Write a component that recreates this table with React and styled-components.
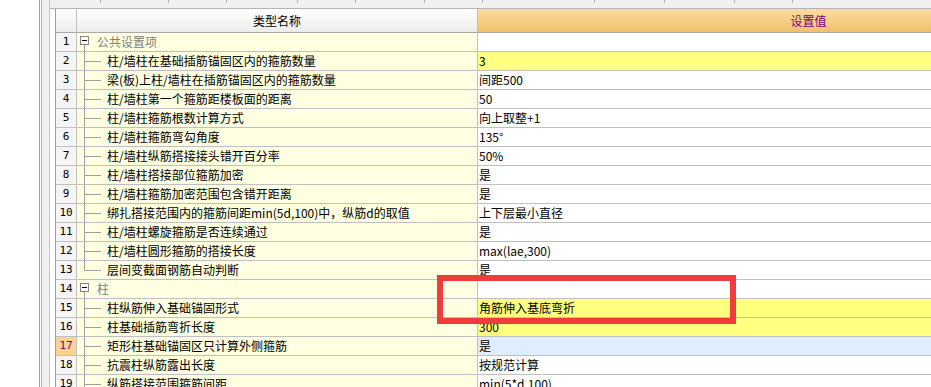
import React from 'react';
import styled, { createGlobalStyle } from 'styled-components';

const GlobalStyle = createGlobalStyle`
  html, body {
    margin: 0;
    padding: 0;
    background: #fff;
    overflow: hidden;
  }

  body {
    font-family: "Noto Sans CJK SC", "Noto Sans", sans-serif;
    font-size: 12px;
    color: #000;
  }
`;

const Page = styled.div`
  position: relative;
  display: flex;
  width: 931px;
  height: 387px;
  overflow: hidden;
  background: #fff;
`;

const Gutter = styled.div`
  flex: none;
  width: 39px;
  background: #fff;
`;

const Frame = styled.div`
  flex: none;
  width: 11px;
  box-sizing: border-box;
  border-left: 1px solid #a0a0a0;
  border-right: 1px solid #c8c8c8;
  background: #f0f0f0;
  box-shadow: inset 1px 0 0 #fff, inset 2px 0 0 #b0b0b0;
`;

const Main = styled.div`
  flex: 1;
  min-width: 0;
  display: flex;
  flex-direction: column;
`;

const TabStrip = styled.div`
  flex: none;
  height: 8px;
  display: flex;
  align-items: flex-start;
  background: #f0f0f0;
  border-bottom: 1px solid #b4b4b4;
`;

const Tab = styled.div`
  flex: none;
  width: ${({ $w }) => $w}px;
  height: 3px;
  box-sizing: border-box;
  border-right: 1px solid #b4b4b4;
`;

const Body = styled.div`
  flex: 1;
  padding-left: 5px;
  background: #fff;
`;

const Grid = styled.div`
  display: grid;
  grid-template-columns: 21px 401px 662px;
  grid-template-rows: 24px;
  grid-auto-rows: 19px;
  border-left: 1px solid #a0a0a0;
`;

const Cell = styled.div`
  box-sizing: border-box;
  display: flex;
  align-items: center;
  min-width: 0;
  overflow: hidden;
  white-space: nowrap;
  line-height: 18px;
  border-right: 1px solid #c0c0c0;
  border-bottom: 1px solid #c0c0c0;
`;

const HeadCell = styled(Cell)`
  justify-content: center;
  border-bottom-color: #a8a8a8;
  color: ${({ $accent }) => ($accent ? '#800080' : '#000')};
  background: ${({ $accent }) =>
    $accent
      ? 'linear-gradient(#fbdca2, #f0c068)'
      : 'linear-gradient(#ffffff, #ececec)'};
`;

const NumCell = styled(Cell)`
  justify-content: center;
  font-family: "DejaVu Sans Mono", monospace;
  font-size: 11px;
  color: ${({ $selected }) => ($selected ? '#800080' : '#000')};
  background: ${({ $selected }) => ($selected ? '#fcd48f' : '#f5f5f5')};
`;

const NameCell = styled(Cell)`
  background: #ffffe1;
`;

const tones = {
  plain: '#ffffff',
  yellow: '#ffff80',
  blue: '#dfeefd',
};

const ValueCell = styled(Cell)`
  padding-left: 1px;
  background: ${({ $tone }) => tones[$tone] || tones.plain};
`;

const GroupLabel = styled.span`
  color: #808080;
`;

const ItemLabel = styled.span`
  margin-left: 6px;
`;

const Highlight = styled.div`
  position: absolute;
  left: 437px;
  top: 275px;
  width: 299px;
  height: 49px;
  box-sizing: border-box;
  border: 6px solid #f23c3c;
  pointer-events: none;
`;

const GroupIcon = ({ open = true }) => (
  <svg width="20" height="18" viewBox="0 0 20 18" style={{ flex: 'none' }}>
    <line x1="7.5" y1="12" x2="7.5" y2="18" stroke="#a0a0a0" />
    <rect x="3.5" y="3.5" width="8" height="8" fill="#fafafa" stroke="#848484" />
    <line x1="5" y1="7.5" x2="10" y2="7.5" stroke="#000" />
    {!open && <line x1="7.5" y1="5" x2="7.5" y2="10" stroke="#000" />}
  </svg>
);

const Connector = ({ last }) => (
  <svg width="24" height="18" viewBox="0 0 24 18" style={{ flex: 'none' }}>
    <line x1="7.5" y1="0" x2="7.5" y2={last ? 9.5 : 18} stroke="#a0a0a0" />
    <line x1="7.5" y1="9.5" x2="24" y2="9.5" stroke="#a0a0a0" />
  </svg>
);

const tabs = [51, 68, 58, 71, 58, 69, 58, 112, 70, 70, 58];

const rows = [
  { group: true, name: '公共设置项', value: '' },
  { name: '柱/墙柱在基础插筋锚固区内的箍筋数量', value: '3', tone: 'yellow' },
  { name: '梁(板)上柱/墙柱在插筋锚固区内的箍筋数量', value: '间距500' },
  { name: '柱/墙柱第一个箍筋距楼板面的距离', value: '50' },
  { name: '柱/墙柱箍筋根数计算方式', value: '向上取整+1' },
  { name: '柱/墙柱箍筋弯勾角度', value: '135°' },
  { name: '柱/墙柱纵筋搭接接头错开百分率', value: '50%' },
  { name: '柱/墙柱搭接部位箍筋加密', value: '是' },
  { name: '柱/墙柱箍筋加密范围包含错开距离', value: '是' },
  { name: '绑扎搭接范围内的箍筋间距min(5d,100)中，纵筋d的取值', value: '上下层最小直径' },
  { name: '柱/墙柱螺旋箍筋是否连续通过', value: '是' },
  { name: '柱/墙柱圆形箍筋的搭接长度', value: 'max(lae,300)' },
  { name: '层间变截面钢筋自动判断', value: '是', last: true },
  { group: true, name: '柱', value: '' },
  { name: '柱纵筋伸入基础锚固形式', value: '角筋伸入基底弯折', tone: 'yellow' },
  { name: '柱基础插筋弯折长度', value: '300', tone: 'yellow' },
  { name: '矩形柱基础锚固区只计算外侧箍筋', value: '是', tone: 'blue', selected: true },
  { name: '抗震柱纵筋露出长度', value: '按规范计算' },
  { name: '纵筋搭接范围箍筋间距', value: 'min(5*d,100)' },
];

export default function App() {
  return (
    <Page>
      <GlobalStyle />
      <Gutter />
      <Frame />
      <Main>
        <TabStrip>
          {tabs.map((w, i) => (
            <Tab key={i} $w={w} />
          ))}
        </TabStrip>
        <Body>
          <Grid>
            <HeadCell />
            <HeadCell>类型名称</HeadCell>
            <HeadCell $accent>设置值</HeadCell>
            {rows.map((row, i) => (
              <React.Fragment key={i}>
                <NumCell $selected={row.selected}>{i + 1}</NumCell>
                <NameCell>
                  {row.group ? (
                    <>
                      <GroupIcon />
                      <GroupLabel>{row.name}</GroupLabel>
                    </>
                  ) : (
                    <>
                      <Connector last={row.last} />
                      <ItemLabel>{row.name}</ItemLabel>
                    </>
                  )}
                </NameCell>
                <ValueCell $tone={row.tone}>{row.value}</ValueCell>
              </React.Fragment>
            ))}
          </Grid>
        </Body>
      </Main>
      <Highlight />
    </Page>
  );
}
